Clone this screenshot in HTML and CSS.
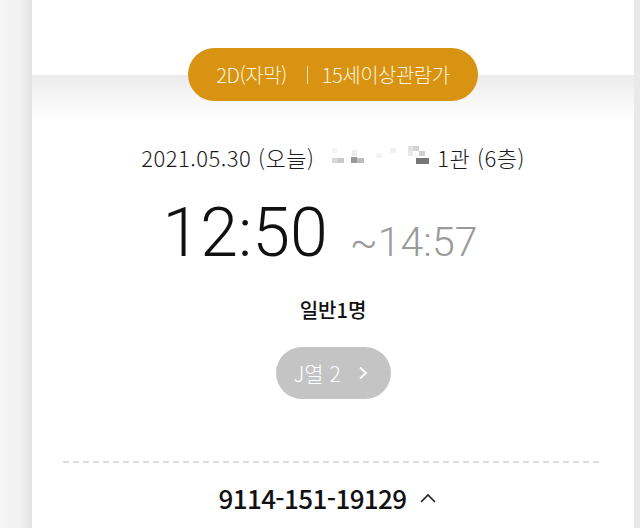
FILE: index.html
```html
<!DOCTYPE html>
<html lang="ko">
<head>
    <meta charset="UTF-8">
    <meta name="viewport" content="width=device-width, initial-scale=1.0">
    <title>모바일 티켓</title>
    <link rel="stylesheet" href="styles.css">
</head>
<body>
    <div class="page">
        <div class="ticket">
            <div class="ticket-top"></div>
            <div class="ticket-body">
                <div class="badge">2D(자막)<span class="sep"></span>15세이상관람가</div>
                <div class="place">
                    <span>2021.05.30 (오늘)</span>
                    <svg class="blur" width="100" height="22" viewBox="0 0 100 22">
                        <rect x="0" y="2" width="5" height="5" fill="#f4f4f4"/>
                        <rect x="0" y="12" width="6" height="5" fill="#d6d6d6"/>
                        <rect x="6" y="12" width="6" height="5" fill="#c9c9c9"/>
                        <rect x="20" y="4" width="5" height="6" fill="#ececec"/>
                        <rect x="19" y="11" width="6" height="6" fill="#9a9a9a"/>
                        <rect x="25" y="12" width="7" height="5" fill="#bdbdbd"/>
                        <rect x="44" y="7" width="6" height="5" fill="#f3f3f3"/>
                        <rect x="58" y="2" width="6" height="5" fill="#f1f1f1"/>
                        <rect x="76" y="0" width="5" height="5" fill="#e2e2e2"/>
                        <rect x="81" y="0" width="6" height="5" fill="#d3d3d3"/>
                        <rect x="76" y="5" width="5" height="5" fill="#e9e9e9"/>
                        <rect x="87" y="5" width="6" height="5" fill="#cfcfcf"/>
                        <rect x="84" y="12" width="13" height="6" fill="#777"/>
                        <rect x="81" y="7" width="6" height="5" fill="#fafafa"/>
                    </svg>
                    <span>1관 (6층)</span>
                </div>
                <div class="time">
                    <span class="start">12:50</span>
                    <span class="end">~14:57</span>
                </div>
                <div class="people">일반1명</div>
                <button class="seat">J열 2
                    <svg width="12" height="16" viewBox="0 0 12 16"><path d="M3 2.5 L9 8 L3 13.5" fill="none" stroke="#fff" stroke-width="1.8"/></svg>
                </button>
                <div class="dashed"></div>
                <div class="number">9114-151-19129
                    <svg width="20" height="14" viewBox="0 0 20 14"><path d="M3 11 L10 4 L17 11" fill="none" stroke="#222" stroke-width="1.6"/></svg>
                </div>
            </div>
        </div>
    </div>
</body>
</html>
```

FILE: styles.css
```css
html, body { margin: 0; height: 100%; }
body {
    font-family: "Noto Sans CJK KR", "Noto Sans", sans-serif;
    background: linear-gradient(to right, #f6f6f6 0, #f1f1f1 20px, #e2e2e2 32px, #e9e9e9 634px);
    overflow: hidden;
}
.page { padding: 0 6px 0 32px; height: 100%; }
.ticket { background: #fff; height: 100%; overflow: hidden; }
.ticket-top { height: 75px; background: #fff; }
.ticket-body {
    background: linear-gradient(#ebebeb 0, #f6f6f6 22px, #fff 48px);
    display: flex;
    flex-direction: column;
    align-items: center;
    height: 100%;
}
.badge {
    margin-top: -27px;
    height: 53px;
    padding: 0 28px;
    border-radius: 27px;
    background: #d89313;
    color: #fdf3dc;
    font-size: 20px;
    font-weight: 300;
    display: flex;
    align-items: center;
    letter-spacing: -0.5px;
}
.sep { width: 1px; height: 18px; background: #f6dfa8; margin: 0 14px 0 20px; }
.place {
    margin-top: 41px;
    line-height: 30px;
    display: flex;
    align-items: center;
    font-size: 22px;
    font-weight: 300;
    color: #1a1a1a;
    letter-spacing: 0.5px;
}
.blur { margin: 0 5px 0 18px; }
.time {
    margin-top: 21px;
    margin-right: 26px;
    display: flex;
    align-items: baseline;
    font-family: Roboto, sans-serif;
    font-weight: 300;
}
.start { font-size: 68px; line-height: 80px; color: #111; }
.end { font-size: 41px; line-height: 1; color: #9a9a9a; margin-left: 22px; }
.people { margin-top: 23px; line-height: 28px; font-size: 20px; font-weight: 500; color: #111; }
.seat {
    margin-top: 23px;
    width: 115px;
    height: 52px;
    border: none;
    border-radius: 26px;
    background: #c4c4c4;
    color: #fff;
    font-family: "Noto Sans CJK KR", sans-serif;
    font-size: 21px;
    font-weight: 300;
    display: flex;
    align-items: center;
    justify-content: flex-start;
    gap: 16px;
    padding: 0 0 0 18px;
}
.dashed {
    margin-top: 62px;
    width: 540px;
    height: 2px;
    background: repeating-linear-gradient(to right, #dedede 0, #dedede 6px, transparent 6px, transparent 10px);
}
.number {
    margin-top: 18px;
    margin-right: 10px;
    line-height: 34px;
    font-size: 26px;
    font-weight: 500;
    color: #111;
    display: flex;
    align-items: center;
    gap: 11px;
    letter-spacing: -0.6px;
}
```
